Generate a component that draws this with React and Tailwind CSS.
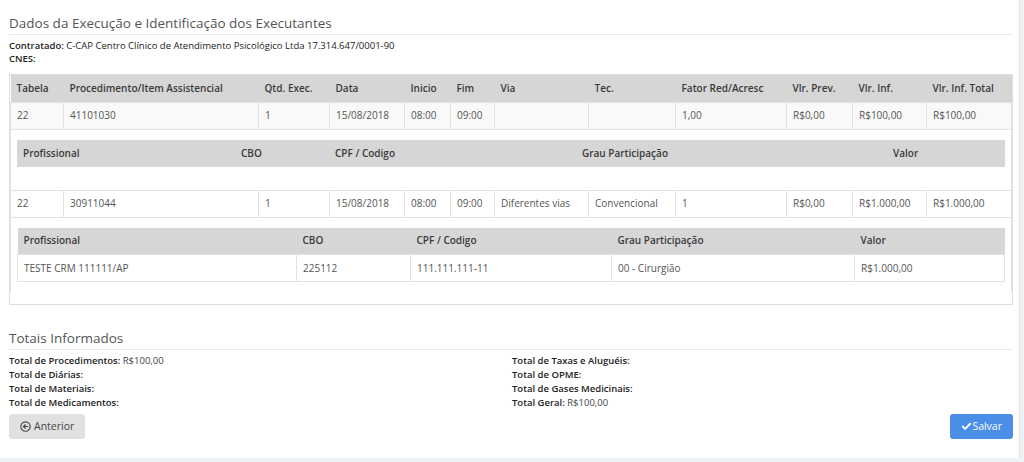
import { CheckIcon } from 'lucide-react'

const FONT = { fontFamily: '"Open Sans", "Liberation Sans", sans-serif' }

const MAIN_COLS = [
    { label: 'Tabela', w: 'w-[53px]' },
    { label: 'Procedimento/Item Assistencial', w: 'w-[195px]' },
    { label: 'Qtd. Exec.', w: 'w-[71px]' },
    { label: 'Data', w: 'w-[75px]' },
    { label: 'Inicio', w: 'w-[46px]' },
    { label: 'Fim', w: 'w-[44px]' },
    { label: 'Via', w: 'w-[94px]' },
    { label: 'Tec.', w: 'w-[87px]' },
    { label: 'Fator Red/Acresc', w: 'w-[111px]' },
    { label: 'Vlr. Prev.', w: 'w-[66px]' },
    { label: 'Vlr. Inf.', w: 'w-[74px]' },
    { label: 'Vlr. Inf. Total', w: '' },
]

const PROCS = [
    {
        cells: ['22', '41101030', '1', '15/08/2018', '08:00', '09:00', '', '', '1,00', 'R$0,00', 'R$100,00', 'R$100,00'],
        striped: true,
        profCols: [
            { label: 'Profissional', w: 'w-[218px]' },
            { label: 'CBO', w: 'w-[94px]' },
            { label: 'CPF / Codigo', w: 'w-[247px]' },
            { label: 'Grau Participação', w: 'w-[311px]' },
            { label: 'Valor', w: '' },
        ],
        profs: [],
    },
    {
        cells: ['22', '30911044', '1', '15/08/2018', '08:00', '09:00', 'Diferentes vias', 'Convencional', '1', 'R$0,00', 'R$1.000,00', 'R$1.000,00'],
        striped: false,
        profCols: [
            { label: 'Profissional', w: 'w-[279px]' },
            { label: 'CBO', w: 'w-[114px]' },
            { label: 'CPF / Codigo', w: 'w-[201px]' },
            { label: 'Grau Participação', w: 'w-[243px]' },
            { label: 'Valor', w: '' },
        ],
        profs: [['TESTE CRM 111111/AP', '225112', '111.111.111-11', '00 - Cirurgião', 'R$1.000,00']],
    },
]

function ProfTable({ cols, rows, first }) {
    return (
        <table className={`w-full border-collapse table-fixed text-[10px] ${first ? 'mb-[23px]' : 'mb-[10px]'}`}>
            <thead>
                <tr className="bg-[#d6d6d6] h-[27px]">
                    {cols.map((c) => (
                        <th key={c.label} className={`${c.w} text-left font-semibold text-[#3a3a3a] px-[6px]`}>{c.label}</th>
                    ))}
                </tr>
            </thead>
            <tbody>
                {rows.map((r, i) => (
                    <tr key={i} className="h-[27px]">
                        {r.map((v, j) => (
                            <td key={j} className="border border-[#e2e2e2] px-[6px] text-[#555]">{v}</td>
                        ))}
                    </tr>
                ))}
            </tbody>
        </table>
    )
}

function SectionTitle({ children }) {
    return (
        <div className="border-b border-[#e8e8e8] pb-[2px]">
            <h3 className="text-[13.5px] text-[#555] leading-[18px]">{children}</h3>
        </div>
    )
}

const TOTALS_LEFT = [
    ['Total de Procedimentos:', 'R$100,00'],
    ['Total de Diárias:', ''],
    ['Total de Materiais:', ''],
    ['Total de Medicamentos:', ''],
]

const TOTALS_RIGHT = [
    ['Total de Taxas e Aluguéis:', ''],
    ['Total de OPME:', ''],
    ['Total de Gases Medicinais:', ''],
    ['Total Geral:', 'R$100,00'],
]

function TotalLine({ label, value }) {
    return (
        <div className="leading-[14px]">
            <span className="font-semibold text-[#222]">{label}</span>{' '}
            <span className="text-[#444]">{value}</span>
        </div>
    )
}

export default function App() {
    return (
        <div className="w-[1024px] h-[462px] bg-[#eef1f5] overflow-hidden" style={FONT}>
            <div className="w-[1020px] h-[458px] bg-white border-r border-[#e3e3e3] pl-[9px] pr-[6px] pt-[14px]">
                <SectionTitle>Dados da Execução e Identificação dos Executantes</SectionTitle>
                <div className="text-[9.5px] text-[#222] leading-[13px] mt-[4px]">
                    <div><span className="font-semibold">Contratado:</span> C-CAP Centro Clínico de Atendimento Psicológico Ltda 17.314.647/0001-90</div>
                    <div className="font-semibold">CNES:</div>
                </div>

                <div className="mt-[9px] border border-[#dedede] pb-[12px]">
                    <table className="w-full border-collapse table-fixed text-[10px]">
                        <thead>
                            <tr className="bg-[#d6d6d6] h-[27px]">
                                {MAIN_COLS.map((c) => (
                                    <th key={c.label} className={`${c.w} text-left font-semibold text-[#3a3a3a] px-[6px] whitespace-nowrap`}>{c.label}</th>
                                ))}
                            </tr>
                        </thead>
                        <tbody>
                            {PROCS.map((p, i) => [
                                <tr key={`r${i}`} className={`h-[27px] ${p.striped ? 'bg-[#f9f9f9]' : 'bg-white'}`}>
                                    {p.cells.map((v, j) => (
                                        <td key={j} className="border border-[#e2e2e2] px-[6px] text-[#555] whitespace-nowrap">{v}</td>
                                    ))}
                                </tr>,
                                <tr key={`p${i}`}>
                                    <td colSpan={12} className="px-[6px] pt-[10px] border-x border-[#e2e2e2]">
                                        <ProfTable cols={p.profCols} rows={p.profs} first={i === 0} />
                                    </td>
                                </tr>,
                            ])}
                        </tbody>
                    </table>
                </div>

                <div className="mt-[24px]">
                    <SectionTitle>Totais Informados</SectionTitle>
                </div>
                <div className="grid grid-cols-2 text-[9.5px] mt-[4px]">
                    <div>
                        {TOTALS_LEFT.map(([l, v]) => <TotalLine key={l} label={l} value={v} />)}
                    </div>
                    <div className="pl-[1px]">
                        {TOTALS_RIGHT.map(([l, v]) => <TotalLine key={l} label={l} value={v} />)}
                    </div>
                </div>

                <div className="flex justify-between mt-[4px]">
                    <button className="flex items-center gap-[3px] h-[25px] px-[11px] rounded-[3px] bg-[#e1e1e1] text-[#444] text-[10.5px]">
                        <svg width="11" height="11" viewBox="0 0 16 16" fill="none" stroke="#444" strokeWidth="1.6">
                            <circle cx="8" cy="8" r="6.8" />
                            <path d="M11.5 8H5M7.8 5.2 5 8l2.8 2.8" strokeLinecap="round" strokeLinejoin="round" />
                        </svg>
                        Anterior
                    </button>
                    <button className="flex items-center h-[25px] px-[11px] rounded-[3px] bg-[#4a8ee8] text-white text-[10.5px]">
                        <CheckIcon className="w-[11px] h-[11px]" strokeWidth={4} />
                        Salvar
                    </button>
                </div>
            </div>
        </div>
    )
}
